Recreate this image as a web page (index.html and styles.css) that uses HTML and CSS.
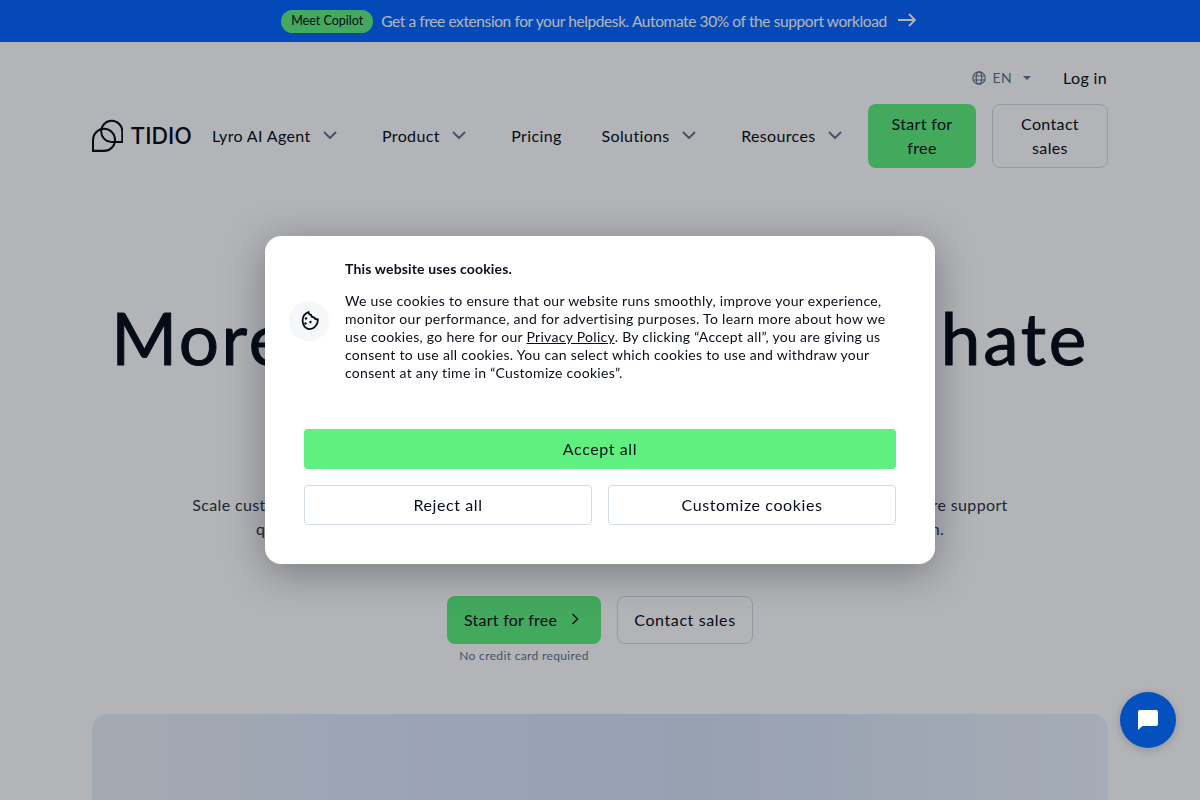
FILE: index.html
```html
<!DOCTYPE html>
<html lang="en">
<head>
    <meta charset="UTF-8">
    <meta name="viewport" content="width=device-width, initial-scale=1.0">
    <title>Tidio</title>
    <link rel="stylesheet" href="styles.css">
</head>
<body>

    <div class="promo-bar">
        <span class="promo-pill">Meet Copilot</span>
        <span class="promo-text">Get a free extension for your helpdesk. Automate 30% of the support workload</span>
        <svg class="promo-arrow" width="18" height="14" viewBox="0 0 18 14" fill="none" stroke="currentColor" stroke-width="1.8"><path d="M0 7h16.5M11 1l6 6-6 6"/></svg>
    </div>

    <div class="container">
        <div class="top-row">
            <svg class="globe" width="14" height="14" viewBox="0 0 14 14" fill="none" stroke="currentColor" stroke-width="1.2"><circle cx="7" cy="7" r="6.2"/><ellipse cx="7" cy="7" rx="2.8" ry="6.2"/><path d="M1 5h12M1 9h12"/></svg>
            <span class="lang">EN</span>
            <span class="caret"></span>
            <a class="login">Log in</a>
        </div>

        <nav class="nav">
            <div class="logo">
                <svg width="34" height="34" viewBox="0 0 34 34" fill="none" stroke="#080f1a" stroke-width="2.2"><path d="M33 23.500H21a11.500 11.500 0 1 1 12-11.500z"/><path d="M1.100 33.200V21a12 12 0 1 1 12 12.200z"/></svg>
                <span class="logo-text">TIDIO</span>
            </div>
            <a class="nav-item has-menu">Lyro AI Agent<svg class="chevron" width="14" height="8" viewBox="0 0 14 8" fill="none" stroke="currentColor" stroke-width="2"><path d="M1 1l6 6 6-6"/></svg></a>
            <a class="nav-item has-menu">Product<svg class="chevron" width="14" height="8" viewBox="0 0 14 8" fill="none" stroke="currentColor" stroke-width="2"><path d="M1 1l6 6 6-6"/></svg></a>
            <a class="nav-item">Pricing</a>
            <a class="nav-item has-menu">Solutions<svg class="chevron" width="14" height="8" viewBox="0 0 14 8" fill="none" stroke="currentColor" stroke-width="2"><path d="M1 1l6 6 6-6"/></svg></a>
            <a class="nav-item has-menu">Resources<svg class="chevron" width="14" height="8" viewBox="0 0 14 8" fill="none" stroke="currentColor" stroke-width="2"><path d="M1 1l6 6 6-6"/></svg></a>
            <a class="nav-btn nav-start">Start for free</a>
            <a class="nav-btn nav-contact">Contact sales</a>
        </nav>

        <section class="hero">
            <h1>More sales, less work to hate<br>with your AI agent</h1>
            <p>Scale customer service with an AI agent that answers your visitors, resolves their issues and gives more support<br>queries on its own, so your main team can focus on the work that needs real human attention.</p>
            <div class="cta-row">
                <div class="cta-col">
                    <a class="cta-start">Start for free<svg width="8" height="12" viewBox="0 0 8 12" fill="none" stroke="currentColor" stroke-width="1.4"><path d="M1.500 1l5 5-5 5"/></svg></a>
                    <span class="cta-note">No credit card required</span>
                </div>
                <a class="cta-contact">Contact sales</a>
            </div>
        </section>

        <div class="hero-visual"></div>
    </div>

    <div class="overlay">
        <div class="cookie-modal">
            <div class="cookie-top">
                <div class="cookie-icon">
                    <svg width="20" height="20" viewBox="0 0 20 20" fill="none" stroke="#080f1a" stroke-width="1.8"><path d="M9.500 1.200c.2 1.600 1.200 2.600 2.600 2.700.2 1.500 1.400 2.600 2.900 2.500.4 1.200 1.400 1.900 3.800 2 .5 5.200-3.800 9.800-9 9.800A9 9 0 0 1 9.500 1.200z"/><circle cx="7" cy="7.500" r="1.200" fill="#080f1a" stroke="none"/><circle cx="6.500" cy="12.500" r="1.200" fill="#080f1a" stroke="none"/><circle cx="11.500" cy="11" r="1.200" fill="#080f1a" stroke="none"/></svg>
                </div>
                <div class="cookie-copy">
                    <h2>This website uses cookies.</h2>
                    <p>We use cookies to ensure that our website runs smoothly, improve your experience,<br>monitor our performance, and for advertising purposes. To learn more about how we<br>use cookies, go here for our <a class="policy-link">Privacy Policy</a>. By clicking “Accept all”, you are giving us<br>consent to use all cookies. You can select which cookies to use and withdraw your<br>consent at any time in “Customize cookies”.</p>
                </div>
            </div>
            <div class="cookie-actions">
                <button class="btn-accept">Accept all</button>
                <div class="cookie-row">
                    <button class="btn-outline">Reject all</button>
                    <button class="btn-outline">Customize cookies</button>
                </div>
            </div>
        </div>
    </div>

    <div class="chat-btn">
        <svg width="20" height="20" viewBox="0 0 20 20" fill="#fff"><path d="M2 0h16a2 2 0 0 1 2 2v12a2 2 0 0 1-2 2H4.500L0 20V2a2 2 0 0 1 2-2z"/></svg>
    </div>

</body>
</html>
```

FILE: styles.css
```css
html, body {
    height: 100%;
    overflow: hidden;
}
body {
    margin: 0;
    font-family: "Lato", "Liberation Sans", sans-serif;
    font-size: 16px;
    letter-spacing: 0.35px;
    color: #080f1a;
    background-color: #fff;
}
a {
    color: inherit;
}

.promo-bar {
    box-sizing: border-box;
    height: 42px;
    padding-right: 3px;
    background: #0566ff;
    color: #fff;
    display: flex;
    align-items: center;
    justify-content: center;
}
.promo-pill {
    height: 23px;
    width: 92px;
    background: #5ff07f;
    color: #080f1a;
    border-radius: 12px;
    font-size: 12.5px;
    letter-spacing: 0;
    line-height: 22px;
    text-align: center;
}
.promo-text {
    margin-left: 8px;
    font-size: 15.5px;
    letter-spacing: -0.4px;
    line-height: 40px;
}
.promo-arrow {
    margin-left: 11px;
    margin-top: -2px;
}

.container {
    width: 1016px;
    margin: 0 auto;
}
.top-row {
    box-sizing: border-box;
    height: 62px;
    padding: 9px 1px 0 0;
    display: flex;
    align-items: center;
    justify-content: flex-end;
    color: #64748b;
}
.lang {
    font-size: 14px;
    margin-left: 7px;
}
.caret {
    margin-left: 11px;
    border-left: 4px solid transparent;
    border-right: 4px solid transparent;
    border-top: 4px solid #64748b;
}
.login {
    margin-left: 32px;
    color: #080f1a;
}

.nav {
    display: flex;
    align-items: center;
    height: 64px;
}
.logo {
    width: 100px;
    flex-shrink: 0;
    display: flex;
    align-items: center;
}
.logo-text {
    margin-left: 7px;
    font-family: "Inter", sans-serif;
    font-size: 23px;
    font-weight: 500;
    letter-spacing: 0;
}
.nav-item {
    display: flex;
    align-items: center;
    padding: 0 20px 2px;
    white-space: nowrap;
}
.nav-item.has-menu {
    padding-right: 25.5px;
}
.chevron {
    margin-left: 12px;
    color: #64748b;
}
.nav-btn {
    box-sizing: border-box;
    height: 64px;
    flex-shrink: 0;
    border-radius: 8px;
    text-align: center;
    line-height: 24px;
    padding: 8px 20px;
}
.nav-start {
    width: 108px;
    margin-left: auto;
    background: #5ff07f;
}
.nav-contact {
    width: 116px;
    margin-left: 16px;
    border: 1px solid #d3dbe5;
    padding-top: 7px;
}

.hero {
    margin-top: 130px;
    text-align: center;
}
.hero h1 {
    margin: 0;
    font-size: 71px;
    line-height: 80px;
    font-weight: 400;
    letter-spacing: 2.7px;
    -webkit-text-stroke: 1px #080f1a;
    white-space: nowrap;
}
.hero p {
    margin: 35px 0 0;
    line-height: 24px;
    color: #2b3648;
    white-space: nowrap;
}
.cta-row {
    margin-top: 55px;
    display: flex;
    justify-content: center;
    gap: 16px;
}
.cta-col {
    display: flex;
    flex-direction: column;
    align-items: center;
}
.cta-start {
    box-sizing: border-box;
    width: 154px;
    height: 48px;
    background: #5ff07f;
    border-radius: 8px;
    display: flex;
    align-items: center;
    justify-content: space-between;
    padding: 0 22px 2px 17px;
    letter-spacing: 0.25px;
}
.cta-note {
    margin-top: 4px;
    font-size: 12px;
    line-height: 16px;
    color: #64748b;
}
.cta-contact {
    box-sizing: border-box;
    width: 136px;
    height: 48px;
    border: 1px solid #d3dbe5;
    border-radius: 8px;
    line-height: 46px;
    letter-spacing: 0.6px;
    text-align: center;
}
.hero-visual {
    margin-top: 50px;
    height: 300px;
    border-radius: 16px;
    background: linear-gradient(90deg, #eaf1f6, #dce6ff 35%, #d8e4f8 60%, #ecf4ff);
}

.overlay {
    position: fixed;
    top: 0;
    left: 0;
    right: 0;
    bottom: 0;
    background: rgba(2, 5, 18, 0.3);
    display: flex;
    align-items: center;
    justify-content: center;
}
.cookie-modal {
    box-sizing: border-box;
    width: 670px;
    height: 328px;
    background: #fff;
    border-radius: 16px;
    padding: 24px 39px 39px 24px;
    box-shadow: 0 8px 40px rgba(8, 15, 26, 0.35);
}
.cookie-top {
    display: flex;
    align-items: center;
    gap: 16px;
}
.cookie-icon {
    width: 40px;
    height: 40px;
    border-radius: 50%;
    background: #f5f7f9;
    display: flex;
    align-items: center;
    justify-content: center;
}
.cookie-copy h2 {
    margin: 0 0 14px;
    font-size: 14px;
    line-height: 18px;
    font-weight: 700;
    letter-spacing: 0.15px;
}
.cookie-copy p {
    margin: 0;
    font-size: 14px;
    line-height: 18px;
    letter-spacing: 0.3px;
    white-space: nowrap;
}
.policy-link {
    text-decoration: underline;
}
.cookie-actions {
    margin: 47px 0 0 15px;
    display: flex;
    flex-direction: column;
    gap: 16px;
}
.cookie-row {
    display: flex;
    gap: 16px;
}
.cookie-actions button {
    height: 40px;
    border-radius: 4px;
    font-family: inherit;
    font-size: 16px;
    letter-spacing: 0.6px;
    padding-bottom: 3px;
    color: #080f1a;
}
.btn-accept {
    background: #5ff07f;
    border: none;
}
.btn-outline {
    flex: 1;
    background: #fff;
    border: 1px solid #d3dbe5;
}

.chat-btn {
    position: fixed;
    right: 24px;
    bottom: 52px;
    width: 56px;
    height: 56px;
    border-radius: 50%;
    background: #0450bf;
    box-shadow: 0 2px 8px rgba(8, 15, 26, 0.2);
    display: flex;
    align-items: center;
    justify-content: center;
}
```
